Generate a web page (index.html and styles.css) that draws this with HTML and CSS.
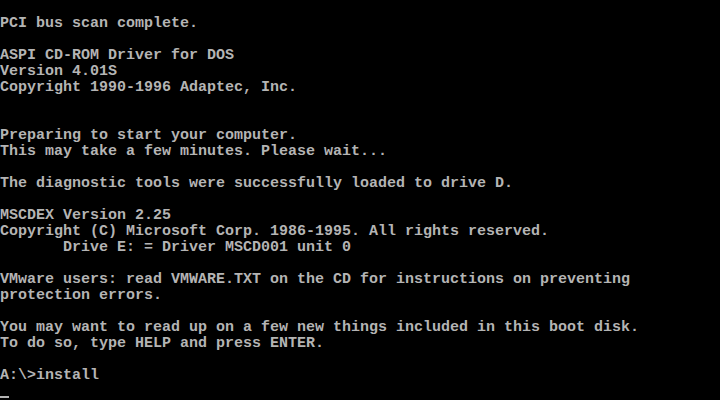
FILE: index.html
```html
<!DOCTYPE html>
<html lang="en">
<head>
    <meta charset="UTF-8">
    <title>DOS Boot</title>
    <link rel="stylesheet" href="styles.css">
</head>
<body>
<pre class="screen">

PCI bus scan complete.

ASPI CD-ROM Driver for DOS
Version 4.01S
Copyright 1990-1996 Adaptec, Inc.


Preparing to start your computer.
This may take a few minutes. Please wait...

The diagnostic tools were successfully loaded to drive D.

MSCDEX Version 2.25
Copyright (C) Microsoft Corp. 1986-1995. All rights reserved.
       Drive E: = Driver MSCD001 unit 0

VMware users: read VMWARE.TXT on the CD for instructions on preventing
protection errors.

You may want to read up on a few new things included in this boot disk.
To do so, type HELP and press ENTER.

A:\>install
<span class="cursor"></span></pre>
</body>
</html>
```

FILE: styles.css
```css
html, body {
    margin: 0;
    padding: 0;
    background: #000;
    width: 720px;
    height: 400px;
    overflow: hidden;
}

.screen {
    margin: 0;
    font-family: 'Liberation Mono', 'DejaVu Sans Mono', monospace;
    font-size: 15px;
    line-height: 16px;
    color: #b4b4b4;
    font-weight: bold;
    letter-spacing: 0;
}

.cursor {
    display: inline-block;
    width: 9px;
    height: 16px;
    box-sizing: border-box;
    border-bottom: 2px solid #b4b4b4;
    vertical-align: top;
    margin-top: -2px;
}
```
